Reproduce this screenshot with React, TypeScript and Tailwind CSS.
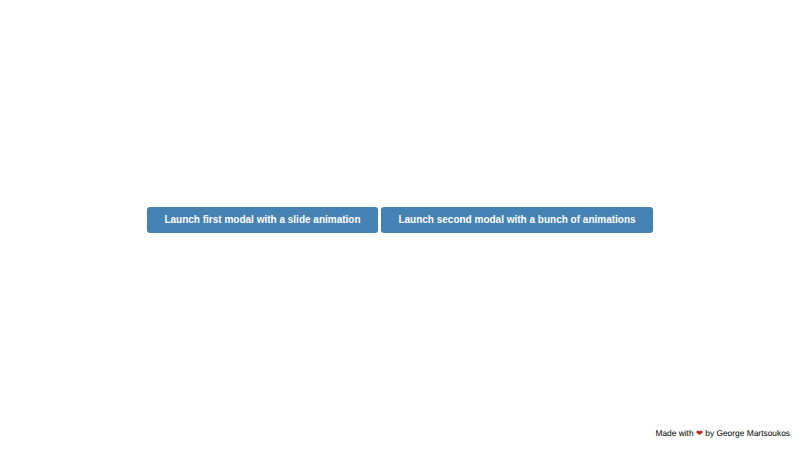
export default function App() {
  return (
    <div className="relative flex h-[450px] w-full items-center justify-center bg-white pb-[10px] font-['Liberation_Sans',Arial,sans-serif] [text-rendering:geometricPrecision]">
      <div className="flex gap-[3px]">
        <button className="h-[26px] w-[231px] whitespace-nowrap rounded-[3px] bg-[#4682b4] pb-px text-[10px] font-bold text-white">
          Launch first modal with a slide animation
        </button>
        <button className="h-[26px] w-[272px] whitespace-nowrap rounded-[3px] bg-[#4682b4] pb-px text-[10px] font-bold text-white">
          Launch second modal with a bunch of animations
        </button>
      </div>
      <footer className="absolute bottom-[10px] right-[10px] whitespace-nowrap text-[8.4px] leading-[13px] text-black">
        Made with <span className="text-[#c0272d]">❤</span> by George Martsoukos
      </footer>
    </div>
  );
}
